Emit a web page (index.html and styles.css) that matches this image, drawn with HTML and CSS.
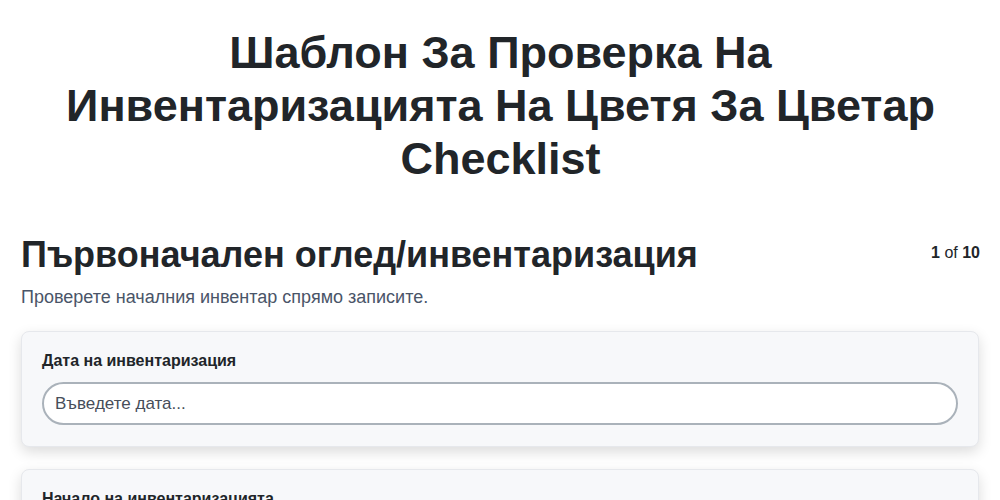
FILE: index.html
```html
<!DOCTYPE html>
<html lang="bg">
<head>
<meta charset="utf-8">
<title>Шаблон За Проверка На Инвентаризацията На Цветя За Цветар Checklist</title>
<link rel="stylesheet" href="styles.css">
</head>
<body>
<main class="page">
  <h1 class="page-title">Шаблон За Проверка На Инвентаризацията На Цветя За Цветар Checklist</h1>

  <section class="step">
    <header class="step-head">
      <h2 class="step-title">Първоначален оглед/инвентаризация</h2>
      <div class="step-count"><b>1</b> of <b>10</b></div>
    </header>
    <p class="step-desc">Проверете началния инвентар спрямо записите.</p>

    <div class="field-card">
      <label class="field-label" for="f1">Дата на инвентаризация</label>
      <input class="field-input" id="f1" type="text" placeholder="Въведете дата...">
    </div>

    <div class="field-card">
      <label class="field-label" for="f2">Начало на инвентаризацията</label>
      <input class="field-input" id="f2" type="text" placeholder="Въведете час...">
    </div>
  </section>
</main>
</body>
</html>
```

FILE: styles.css
```css
* { box-sizing: border-box; }

html, body {
  margin: 0;
  background: #ffffff;
}

body {
  font-family: "Liberation Sans", Arial, sans-serif;
  color: #212529;
}

.page {
  padding: 26px 20px 20px 21px;
}

.page-title {
  margin: 0 auto 48px;
  max-width: 880px;
  text-align: center;
  font-size: 45px;
  line-height: 53px;
  font-weight: 700;
  color: #212529;
}

.step-head {
  display: flex;
  justify-content: space-between;
  align-items: flex-start;
}

.step-title {
  margin: 0;
  font-size: 36px;
  line-height: 44px;
  font-weight: 700;
  color: #212529;
}

.step-count {
  padding-top: 11px;
  font-size: 16px;
  line-height: 18px;
  color: #212529;
}

.step-count b { font-weight: 700; }

.step-desc {
  margin: 8px 0 22px;
  font-size: 18px;
  line-height: 24px;
  color: #4a5568;
}

.field-card {
  display: flex;
  flex-direction: column;
  width: 958px;
  padding: 20px 20px 21px;
  margin-bottom: 22px;
  background: #f7f8fa;
  border: 1px solid #e6e8ec;
  border-radius: 8px;
  box-shadow: 0 5px 14px rgba(0, 0, 0, 0.14);
}

.field-label {
  font-size: 16px;
  line-height: 18px;
  font-weight: 700;
  color: #212529;
  margin-bottom: 12px;
}

.field-input {
  height: 43px;
  padding: 0 11px;
  border: 2px solid #aab2ba;
  border-radius: 22px;
  background: #ffffff;
  font-family: "Liberation Sans", Arial, sans-serif;
  font-size: 17px;
  color: #212529;
  outline: none;
}

.field-input::placeholder {
  color: #474e5a;
}
```
